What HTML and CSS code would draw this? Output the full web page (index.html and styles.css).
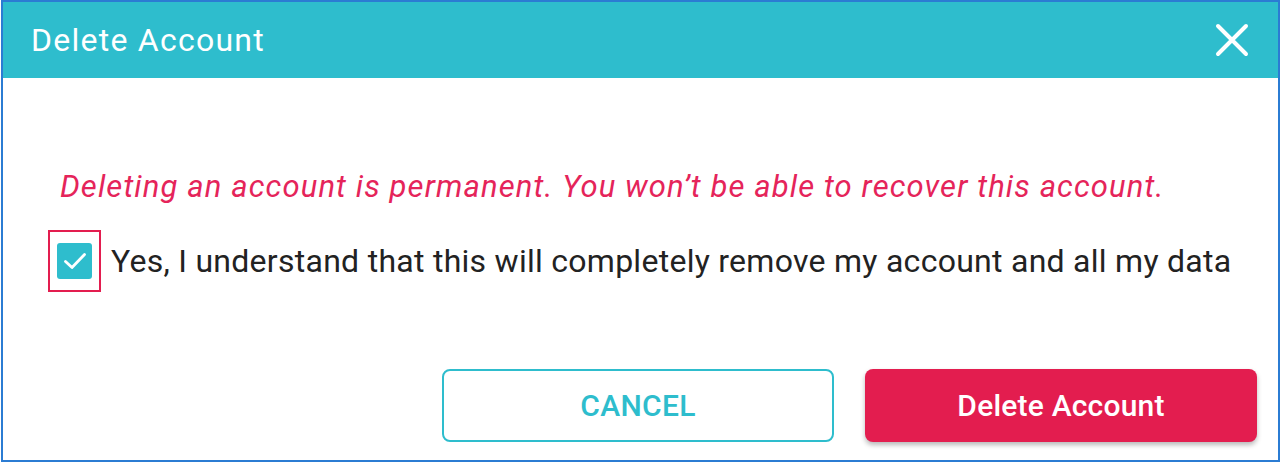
FILE: index.html
```html
<!DOCTYPE html>
<html lang="en">
<head>
<meta charset="utf-8">
<title>Delete Account</title>
<link rel="stylesheet" href="styles.css">
</head>
<body>
<div class="dialog">
  <header class="dialog-header">
    <h1 class="dialog-title">Delete Account</h1>
    <button class="close-btn" aria-label="Close">
      <svg width="34" height="34" viewBox="0 0 34 34"><path d="M3 3 L31 31 M31 3 L3 31" stroke="#fff" stroke-width="4" stroke-linecap="round"/></svg>
    </button>
  </header>
  <main class="dialog-body">
    <p class="warning">Deleting an account is permanent. You won’t be able to recover this account.</p>
    <label class="confirm">
      <span class="check-frame">
        <span class="checkbox">
          <svg width="24" height="20" viewBox="0 0 24 20"><path d="M2.5 10.5 L9 16.5 L21.5 3.5" fill="none" stroke="#fff" stroke-width="2.8" stroke-linecap="round" stroke-linejoin="round"/></svg>
        </span>
      </span>
      <span class="confirm-text">Yes, I understand that this will completely remove my account and all my data</span>
    </label>
    <div class="actions">
      <button class="btn btn-cancel">CANCEL</button>
      <button class="btn btn-delete">Delete Account</button>
    </div>
  </main>
</div>
</body>
</html>
```
FILE: styles.css
```css
* { box-sizing: border-box; }
html, body { margin: 0; padding: 0; background: #fff; }
body { font-family: Roboto, "Liberation Sans", sans-serif; }

.dialog {
  width: 1279px;
  height: 462px;
  margin-left: 1px;
  border: 2px solid #2b7cd3;
  display: flex;
  flex-direction: column;
  background: #fff;
}

.dialog-header {
  height: 76px;
  background: #2ebdcd;
  display: flex;
  align-items: center;
  justify-content: space-between;
  padding: 0 29px 0 28px;
  flex-shrink: 0;
}
.dialog-title {
  margin: 0;
  color: #fff;
  font-size: 32px;
  font-weight: 400;
  letter-spacing: 1.25px;
}
.close-btn {
  background: none;
  border: 0;
  padding: 0;
  width: 34px;
  height: 34px;
  display: flex;
  cursor: pointer;
}

.dialog-body {
  flex: 1;
  display: flex;
  flex-direction: column;
  padding: 92px 20px 0 45px;
}
.warning {
  margin: 0 0 0 12px;
  color: #e5245a;
  font-style: italic;
  font-size: 31px;
  line-height: 34px;
  letter-spacing: 1.12px;
}
.confirm {
  margin-top: 26px;
  display: flex;
  align-items: center;
  gap: 10px;
}
.check-frame {
  width: 53px;
  height: 62px;
  border: 2px solid #e31d4f;
  display: flex;
  align-items: center;
  justify-content: center;
}
.checkbox {
  width: 35px;
  height: 36px;
  border-radius: 3px;
  background: #2ebdcd;
  display: flex;
  align-items: center;
  justify-content: center;
}
.confirm-text {
  font-size: 32px;
  color: #222;
  letter-spacing: 0.27px;
}

.actions {
  margin-top: 77px;
  display: flex;
  justify-content: flex-end;
  gap: 31px;
  padding-right: 1px;
}
.btn {
  width: 392px;
  height: 73px;
  border-radius: 8px;
  font-family: Roboto, "Liberation Sans", sans-serif;
  font-size: 30px;
  font-weight: 500;
  cursor: pointer;
}
.btn-cancel {
  background: #fff;
  border: 2px solid #2ebdcd;
  color: #2ebdcd;
  letter-spacing: 0.3px;
}
.btn-delete {
  background: #e31d4f;
  border: 0;
  color: #fff;
  letter-spacing: 0.2px;
  box-shadow: 0 3px 5px rgba(0,0,0,0.28);
}
```
